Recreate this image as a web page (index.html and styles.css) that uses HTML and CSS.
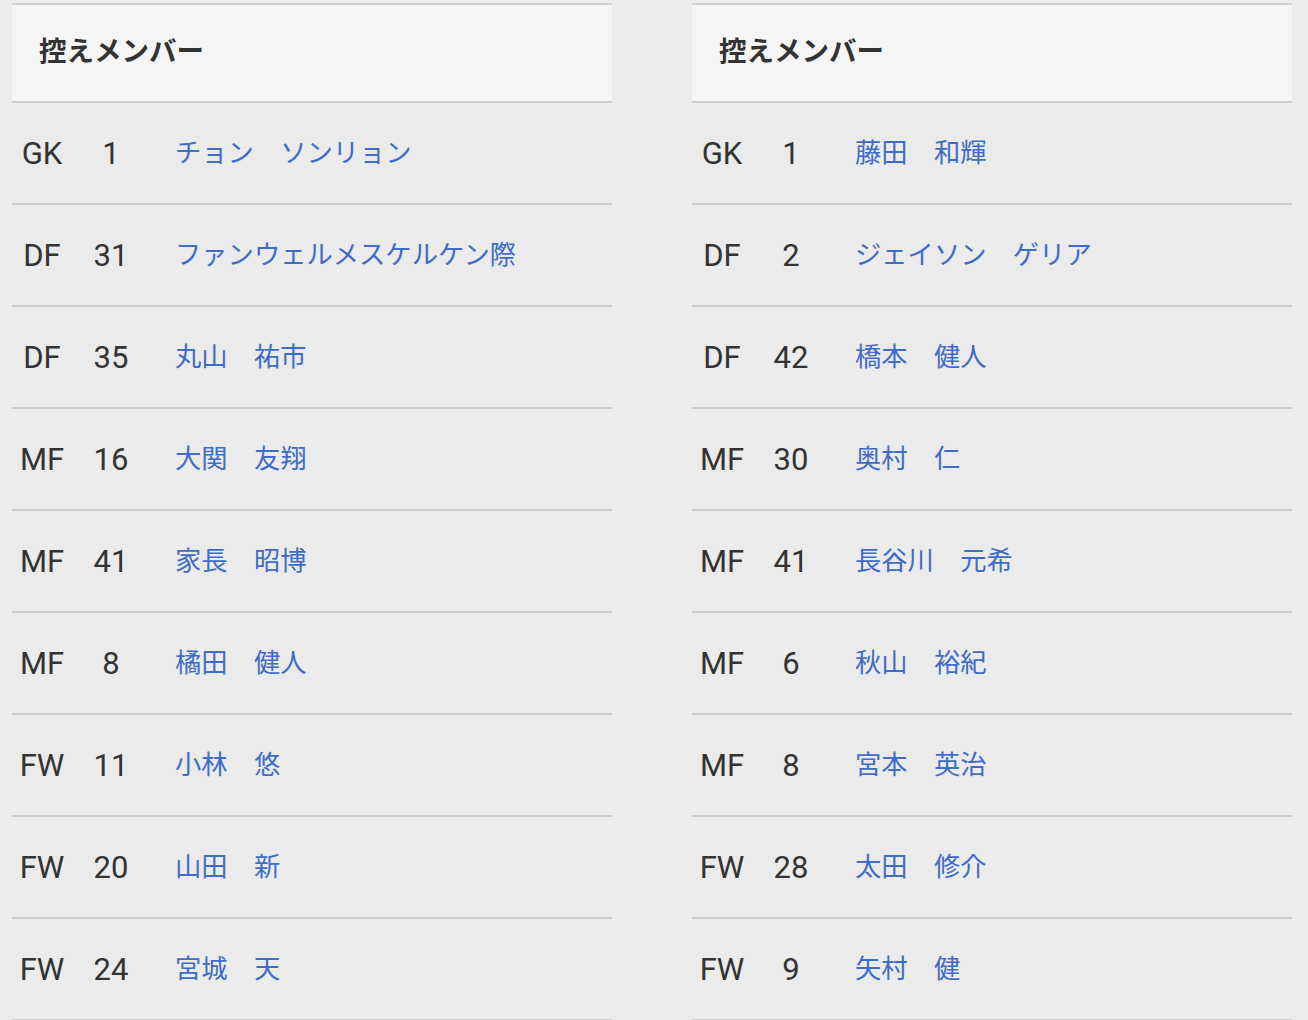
FILE: index.html
```html
<!DOCTYPE html>
<html lang="ja">
<head>
<meta charset="utf-8">
<title>控えメンバー</title>
<link rel="stylesheet" href="styles.css">
</head>
<body>
<div class="page">
  <section class="team">
    <div class="team-head">控えメンバー</div>
    <div class="row"><span class="pos">GK</span><span class="num">1</span><a class="name">チョン　ソンリョン</a></div>
    <div class="row"><span class="pos">DF</span><span class="num">31</span><a class="name">ファンウェルメスケルケン際</a></div>
    <div class="row"><span class="pos">DF</span><span class="num">35</span><a class="name">丸山　祐市</a></div>
    <div class="row"><span class="pos">MF</span><span class="num">16</span><a class="name">大関　友翔</a></div>
    <div class="row"><span class="pos">MF</span><span class="num">41</span><a class="name">家長　昭博</a></div>
    <div class="row"><span class="pos">MF</span><span class="num">8</span><a class="name">橘田　健人</a></div>
    <div class="row"><span class="pos">FW</span><span class="num">11</span><a class="name">小林　悠</a></div>
    <div class="row"><span class="pos">FW</span><span class="num">20</span><a class="name">山田　新</a></div>
    <div class="row"><span class="pos">FW</span><span class="num">24</span><a class="name">宮城　天</a></div>
  </section>
  <section class="team">
    <div class="team-head">控えメンバー</div>
    <div class="row"><span class="pos">GK</span><span class="num">1</span><a class="name">藤田　和輝</a></div>
    <div class="row"><span class="pos">DF</span><span class="num">2</span><a class="name">ジェイソン　ゲリア</a></div>
    <div class="row"><span class="pos">DF</span><span class="num">42</span><a class="name">橋本　健人</a></div>
    <div class="row"><span class="pos">MF</span><span class="num">30</span><a class="name">奥村　仁</a></div>
    <div class="row"><span class="pos">MF</span><span class="num">41</span><a class="name">長谷川　元希</a></div>
    <div class="row"><span class="pos">MF</span><span class="num">6</span><a class="name">秋山　裕紀</a></div>
    <div class="row"><span class="pos">MF</span><span class="num">8</span><a class="name">宮本　英治</a></div>
    <div class="row"><span class="pos">FW</span><span class="num">28</span><a class="name">太田　修介</a></div>
    <div class="row"><span class="pos">FW</span><span class="num">9</span><a class="name">矢村　健</a></div>
  </section>
</div>
</body>
</html>
```
FILE: styles.css
```css
html, body {
  margin: 0;
  padding: 0;
  background: #ebebeb;
  height: 100%;
  overflow: hidden;
}

body {
  font-family: "Noto Sans CJK JP", "Noto Sans", sans-serif;
  color: #333333;
}

.page {
  display: flex;
  gap: 80px;
  padding: 3px 16px 0 12px;
}

.team {
  width: 600px;
  flex: 0 0 600px;
}

.team-head {
  height: 89px;
  padding: 0 0 7px 27px;
  background: #f5f5f5;
  border-top: 2px solid #cccccc;
  border-bottom: 2px solid #cccccc;
  display: flex;
  align-items: center;
  font-size: 27.5px;
  font-weight: bold;
  line-height: 1;
  color: #333333;
}

.row {
  height: 100px;
  border-bottom: 2px solid #cccccc;
  display: grid;
  grid-template-columns: 60px 78px 1fr;
  align-items: center;
}

.pos,
.num {
  font-family: Roboto, "Liberation Sans", sans-serif;
  font-size: 31px;
  text-align: center;
  color: #333333;
  line-height: 1;
}

.name {
  padding-left: 25px;
  margin-bottom: 3px;
  font-size: 26.3px;
  color: #3e6cc6;
  text-decoration: none;
  line-height: 1;
  white-space: nowrap;
}
```
